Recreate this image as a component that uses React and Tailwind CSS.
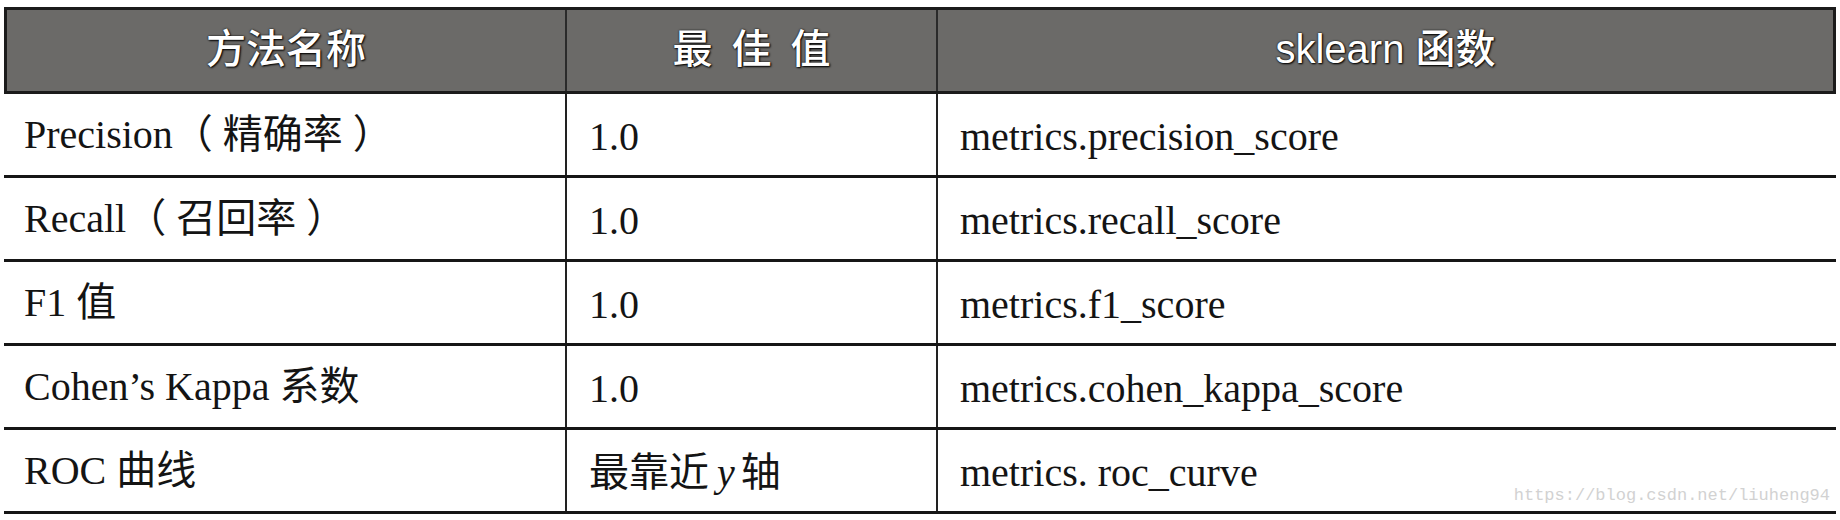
import React from "react";

const rows = [
  {
    name: "Precision（ 精确率 ）",
    best: "1.0",
    fn: "metrics.precision_score",
  },
  {
    name: "Recall（ 召回率 ）",
    best: "1.0",
    fn: "metrics.recall_score",
  },
  {
    name: "F1 值",
    best: "1.0",
    fn: "metrics.f1_score",
  },
  {
    name: "Cohen’s Kappa 系数",
    best: "1.0",
    fn: "metrics.cohen_kappa_score",
  },
  {
    name: "ROC 曲线",
    best: (
      <>
        最靠近
        <i className="ml-[8px] mr-[6px] font-['Liberation_Serif']">y</i>
        轴
      </>
    ),
    fn: "metrics. roc_curve",
    watermark: true,
  },
];

export default function App() {
  return (
    <div className="w-[1840px] h-[520px] bg-white pt-[7px] overflow-hidden">
      <div className="ml-[4px] w-[1832px]">
        {/* Header */}
        <div className="grid grid-cols-[560px_371px_1fr] h-[87px] border-[3px] border-[#1b1b1b] bg-[#6b6a68] text-white text-[40px] font-medium font-['Liberation_Sans','Noto_Sans_CJK_SC',sans-serif] [text-shadow:0_0_2px_#000,1px_1px_2px_#000]">
          <div className="flex items-center justify-center border-r-2 border-[#2a2a2a] pb-[4px]">
            方法名称
          </div>
          <div className="flex items-center justify-center border-r-2 border-[#2a2a2a] pb-[4px] [word-spacing:8px]">
            最 佳 值
          </div>
          <div className="flex items-center justify-center pb-[4px]">
            sklearn 函数
          </div>
        </div>

        {/* Body */}
        {rows.map((row, i) => (
          <div
            key={i}
            className="grid grid-cols-[563px_371px_1fr] h-[84px] border-b-[3px] border-[#161616] text-[#141414] text-[40px] leading-none font-['Liberation_Serif','Noto_Sans_CJK_SC',serif]"
          >
            <div className="flex items-center pl-[20px] border-r-2 border-[#222]">
              {row.name}
            </div>
            <div className="flex items-center pl-[22px] border-r-2 border-[#222] pt-[4px]">
              {row.best}
            </div>
            <div className="relative flex items-center pl-[22px] pt-[4px]">
              {row.fn}
              {row.watermark && (
                <span className="absolute right-[6px] bottom-[7px] text-[17px] leading-none text-[#d2d2d2] font-['Liberation_Mono',monospace]">
                  https://blog.csdn.net/liuheng94
                </span>
              )}
            </div>
          </div>
        ))}
      </div>
    </div>
  );
}
